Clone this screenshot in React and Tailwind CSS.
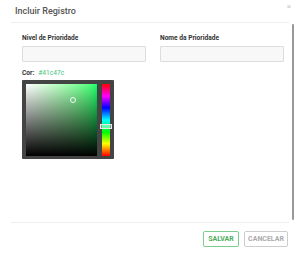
export default function App() {
  return (
    <div className="w-[300px] h-[255px] bg-white flex flex-col font-['Roboto',sans-serif] text-[#333] overflow-hidden">
      {/* Header */}
      <div className="h-[22px] flex items-start justify-between pl-[15px] pr-[9px]">
        <span className="mt-[6px] text-[9px] font-medium text-[#555] leading-[10px]">Incluir Registro</span>
        <span className="mt-[3px] text-[8px] text-[#c8c8c8] leading-[8px]">×</span>
      </div>
      <div className="mx-[11px] h-px bg-[#eeeeee]" />

      {/* Body */}
      <div className="h-[199px] flex">
        <div className="flex-1 pl-[22px] pt-[11px]">
          <div className="grid grid-cols-[124px_124px] gap-x-[14px]">
            <div className="flex flex-col">
              <span className="text-[6.6px] font-bold leading-[8px] text-[#333]">Nivel de Prioridade</span>
              <div className="mt-[4px] h-[16px] border border-[#dddddd] bg-[#f8f8f8] rounded-[1px]" />
            </div>
            <div className="flex flex-col">
              <span className="text-[6.6px] font-bold leading-[8px] text-[#333]">Nome da Prioridade</span>
              <div className="mt-[4px] h-[16px] border border-[#dddddd] bg-[#f8f8f8] rounded-[1px]" />
            </div>
          </div>

          <div className="mt-[7px] flex items-center gap-[4px] leading-[8px]">
            <span className="text-[6.6px] font-bold text-[#333]">Cor:</span>
            <span className="text-[6.6px] text-[#41c47c]">#41c47c</span>
          </div>

          {/* Color picker */}
          <div className="mt-[3px] w-[92px] h-[79px] bg-[#444444] rounded-[1px] flex pl-[4px] pt-[4px] pb-[3px] pr-[4px] gap-[5px]">
            <div className="relative w-[71px] h-[72px] bg-linear-to-r from-white to-[#00ff6a]">
              <div className="absolute inset-0 bg-linear-to-t from-black to-transparent" />
              <div className="absolute left-[44px] top-[13px] w-[6px] h-[6px] rounded-full border border-white/90" />
            </div>
            <div className="relative w-[8px] h-[72px] bg-[linear-gradient(to_bottom,#ff0000_0%,#ff00ff_17%,#0000ff_33%,#00ffff_50%,#00ff00_67%,#ffff00_83%,#ff0000_100%)]">
              <div className="absolute left-[-2px] top-[40px] w-[12px] h-[5px] border border-[#e8e8e8] bg-white/40" />
            </div>
          </div>
        </div>
        <div className="mr-[6px] mt-[1px] w-[2px] h-[196px] bg-[#999999] rounded-[1px]" />
      </div>

      {/* Footer */}
      <div className="mx-[11px] h-px bg-[#eeeeee]" />
      <div className="flex justify-end gap-[5px] pr-[12px] pt-[8px]">
        <button className="h-[16px] w-[36px] border border-[#7cce8c] rounded-[2px] text-[7px] font-bold text-[#4cae5c] leading-none">SALVAR</button>
        <button className="h-[16px] w-[44px] border border-[#cccccc] rounded-[2px] text-[7px] font-bold text-[#aaaaaa] leading-none">CANCELAR</button>
      </div>
    </div>
  );
}
